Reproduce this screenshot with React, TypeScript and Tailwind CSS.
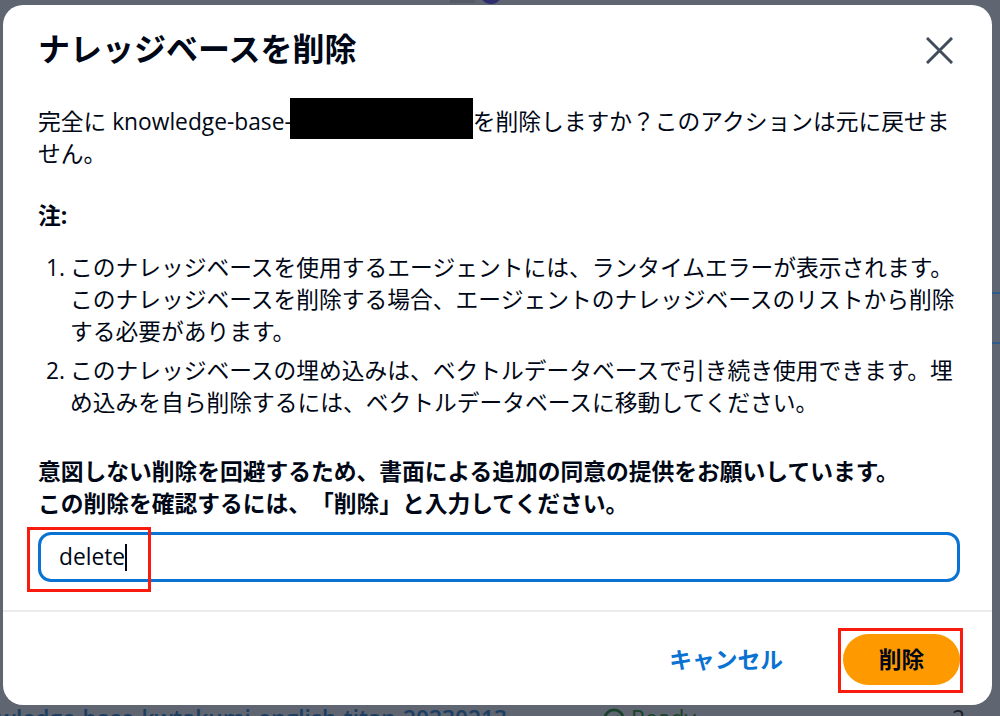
import React from "react";

const FONT = { fontFamily: '"Open Sans", "Noto Sans CJK JP", sans-serif' };

const CloseIcon: React.FC = () => (
  <svg viewBox="0 0 27 27" className="w-[27px] h-[27px]" fill="none">
    <path
      d="M2 2 L25 25 M25 2 L2 25"
      stroke="#414d5c"
      strokeWidth="3"
      strokeLinecap="square"
    />
  </svg>
);

const notes = [
  "このナレッジベースを使用するエージェントには、ランタイムエラーが表示されます。このナレッジベースを削除する場合、エージェントのナレッジベースのリストから削除する必要があります。",
  "このナレッジベースの埋め込みは、ベクトルデータベースで引き続き使用できます。埋め込みを自ら削除するには、ベクトルデータベースに移動してください。",
];

const App: React.FC = () => {
  return (
    <div
      className="relative w-[1000px] h-[716px] overflow-hidden bg-[#5f6571] text-[#000716] [text-spacing-trim:space-all]"
      style={FONT}
    >
      {/* page behind the backdrop */}
      <span className="absolute left-[450px] top-0 w-[25px] h-[3px] bg-[#555b66]" />
      <span className="absolute left-[480px] top-[-18px] w-[22px] h-[22px] rounded-full bg-[#2e2d6e]" />
      <span className="absolute left-[992px] top-[292px] w-[8px] h-[2px] bg-[#2f5c8c]" />
      <span className="absolute left-[992px] top-[342px] w-[8px] h-[2px] bg-[#2f5c8c]" />
      <div className="absolute left-0 top-[703px] w-full flex items-center h-[32px] text-[22.75px] leading-[32px]">
        <div className="w-[600px] overflow-hidden whitespace-nowrap">
          <span className="ml-[-44px] text-[#1c3f63] font-semibold">
            knowledge-base-kwtakumi-english-titan-20230213
          </span>
        </div>
        <div className="w-[212px] flex items-center gap-[6px] pl-[3px] text-[#1a432b]">
          <svg viewBox="0 0 24 24" className="w-[22px] h-[22px]" fill="none">
            <circle cx="12" cy="12" r="10" stroke="#1a432b" strokeWidth="3" />
            <path d="M7 12 l3.5 3.5 L17 9" stroke="#1a432b" strokeWidth="3" />
          </svg>
          <span>Ready</span>
        </div>
        <div className="w-[140px] text-[#19202b] font-bold">-</div>
        <div className="text-[#19202b]">2</div>
      </div>

      {/* modal */}
      <div className="absolute left-[3px] top-[5px] w-[989px] h-[700px] bg-white rounded-[20px] flex flex-col">
        <div className="flex items-start justify-between pl-[35px] pr-[39px] pt-[24px]">
          <h2 className="text-[32px] leading-[40px] font-bold">ナレッジベースを削除</h2>
          <button type="button" className="mt-[8px]">
            <CloseIcon />
          </button>
        </div>

        <div className="pl-[35px] pr-[32px] text-[22.75px] leading-[32px]">
          <p className="mt-[37px]">
            完全に knowledge-base-
            <span className="relative inline-block align-top w-[183px] h-[32px] ml-[-2px]">
              <span className="absolute left-0 right-0 top-[-8px] bottom-[-1px] bg-black" />
            </span>
            を削除しますか？このアクションは元に戻せません。
          </p>

          <p className="mt-[30px] font-bold">注:</p>
          <ol className="mt-[20px] flex flex-col gap-[7px]">
            {notes.map((note, i) => (
              <li key={i} className="flex">
                <span className="w-[32px] shrink-0 text-right pr-[5px]">{i + 1}.</span>
                <span>{note}</span>
              </li>
            ))}
          </ol>

          <p className="mt-[37px] font-bold">
            意図しない削除を回避するため、書面による追加の同意の提供をお願いしています。
            <br />
            この削除を確認するには、「削除」と入力してください。
          </p>

          <div className="mt-[12px] h-[50px] border-[3px] border-[#0972d3] rounded-[13px] flex items-center pl-[18px]">
            <span>delete</span>
            <span className="w-[1.5px] h-[27px] bg-[#000716]" />
          </div>
        </div>

        <div className="mt-[28px] h-[2px] bg-[#e9ebed]" />

        <div className="mt-[22px] flex items-center justify-end pr-[32px] text-[22.75px] leading-[32px] font-bold">
          <button type="button" className="text-[#0972d3] mr-[60px]">
            キャンセル
          </button>
          <button
            type="button"
            className="w-[117px] h-[51px] rounded-full bg-[#ff9900] text-[#000716]"
          >
            削除
          </button>
        </div>
      </div>

      {/* red annotation boxes */}
      <span className="absolute left-[27px] top-[527px] w-[124px] h-[65px] border-[3px] border-[#f91b0e]" />
      <span className="absolute left-[838px] top-[628px] w-[125px] h-[65px] border-[3px] border-[#f91b0e]" />
    </div>
  );
};

export default App;
